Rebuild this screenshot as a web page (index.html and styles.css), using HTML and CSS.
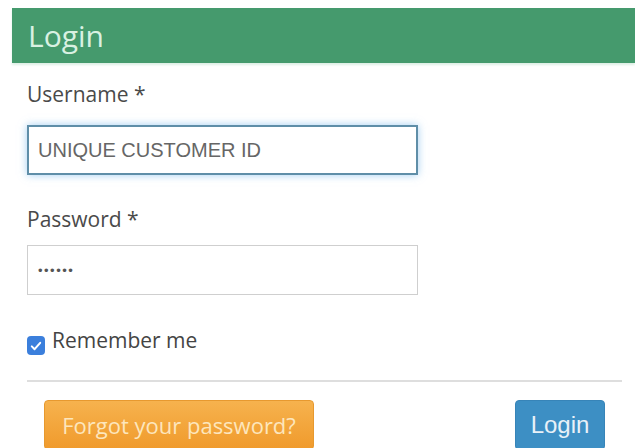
FILE: index.html
```html
<!DOCTYPE html>
<html lang="en">
<head>
<meta charset="utf-8">
<title>Login</title>
<link rel="stylesheet" href="styles.css">
</head>
<body>
<div class="panel">
  <div class="panel-heading">Login</div>
  <form class="login-form">
    <div class="field">
      <label class="field-label" for="username">Username *</label>
      <input class="text-input is-focused" id="username" type="text" value="UNIQUE CUSTOMER ID">
    </div>
    <div class="field field-password">
      <label class="field-label" for="password">Password *</label>
      <input class="text-input" id="password" type="password" value="123456">
    </div>
    <label class="remember">
      <span class="check-box">
        <svg viewBox="0 0 16 16" width="16" height="16"><path d="M3.8 8.4 L6.6 11.2 L12.2 4.8" fill="none" stroke="#fff" stroke-width="2" stroke-linecap="round" stroke-linejoin="round"/></svg>
      </span>
      <span class="remember-text">Remember me</span>
    </label>
    <div class="form-actions">
      <button type="button" class="btn btn-warning">Forgot your password?</button>
      <button type="submit" class="btn btn-primary">Login</button>
    </div>
  </form>
</div>
</body>
</html>
```

FILE: styles.css
```css
html, body {
  margin: 0;
  padding: 0;
  background: #fff;
}

body {
  font-family: "Open Sans", "Noto Sans", sans-serif;
  color: #444;
  overflow: hidden;
}

.panel {
  padding-top: 8px;
}

.panel-heading {
  margin-left: 12px;
  height: 55px;
  background: #459a6d;
  color: #d9f1e2;
  font-size: 30px;
  line-height: 55px;
  padding-left: 16px;
  box-shadow: 0 2px 2px rgba(120, 190, 150, 0.25);
}

.login-form {
  padding: 0 13px 0 27px;
}

.field {
  display: flex;
  flex-direction: column;
}

.field-label {
  margin-top: 18px;
  font-size: 21px;
  line-height: 26px;
  color: #4a4a4a;
}

.field-password .field-label {
  margin-top: 31px;
}

.text-input {
  box-sizing: border-box;
  margin-top: 18px;
  width: 391px;
  height: 50px;
  padding: 0 9px;
  border: 1px solid #cfcfcf;
  border-radius: 0;
  background: #fff;
  font-family: "Liberation Sans", Arial, sans-serif;
  font-size: 20px;
  color: #666;
  outline: none;
}

.field-password .text-input {
  margin-top: 13px;
  padding-left: 10px;
}

.text-input.is-focused {
  border: 2px solid #5f8ea8;
  box-shadow: 0 0 8px rgba(102, 175, 233, 0.6);
}

#password {
  font-size: 13px;
  letter-spacing: 1.5px;
  color: #555;
}

.remember {
  display: flex;
  align-items: flex-start;
  gap: 7px;
  margin-top: 32px;
}

.check-box {
  display: flex;
  align-items: center;
  justify-content: center;
  width: 18px;
  height: 19px;
  margin-top: 9px;
  border-radius: 4px;
  background: #3b7fdc;
}

.remember-text {
  font-size: 21px;
  line-height: 26px;
  color: #444;
}

.form-actions {
  display: flex;
  justify-content: space-between;
  align-items: flex-start;
  margin-top: 25px;
  padding: 18px 17px 0 17px;
  border-top: 2px solid #dedede;
}

.btn {
  height: 50px;
  border-radius: 4px;
  cursor: pointer;
  padding: 0;
}

.btn-warning {
  width: 270px;
  border: 1px solid #e7992f;
  background: linear-gradient(#f6b24e, #f09a2c);
  color: #fde6bd;
  font-family: "Open Sans", "Noto Sans", sans-serif;
  font-size: 22px;
}

.btn-primary {
  width: 90px;
  border: 1px solid #3784b8;
  background: #3d8fc4;
  color: #e8f1f8;
  font-family: "Liberation Sans", Arial, sans-serif;
  font-size: 24px;
}
```
